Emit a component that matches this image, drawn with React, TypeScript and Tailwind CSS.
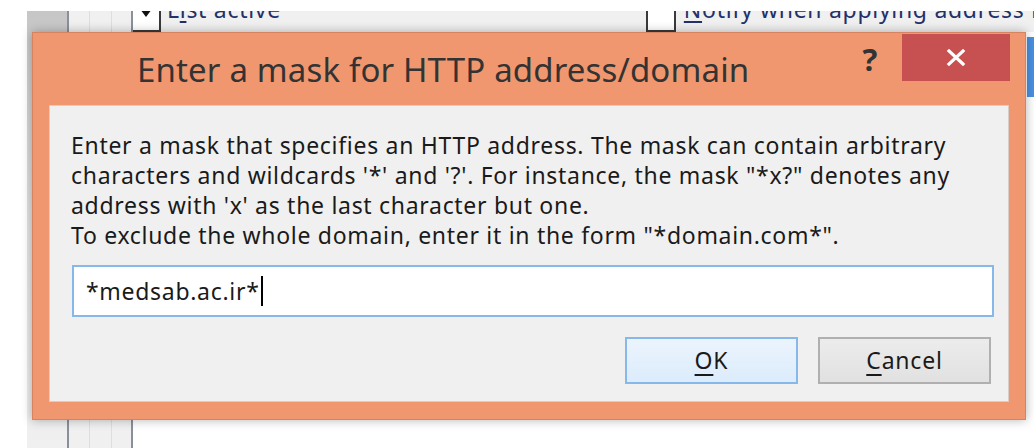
const font = "font-['Noto_Sans','Open_Sans',sans-serif]";

function CloseGlyph() {
  return (
    <svg width="20" height="17" viewBox="0 0 20 17" aria-hidden>
      <path d="M3 2 L17 15 M17 2 L3 15" stroke="#ffffff" strokeWidth="3.2" strokeLinecap="square" />
    </svg>
  );
}

function Check({ checked }: { checked?: boolean }) {
  return (
    <div className="mt-[-9px] flex h-[30px] w-[30px] shrink-0 items-start justify-center border-2 border-[#3a3a3a] bg-white">
      {checked && (
        <svg width="14" height="10" viewBox="0 0 14 10" className="mt-[4px]" aria-hidden>
          <path d="M1 1 L13 1 L7 9 Z" fill="#111" />
        </svg>
      )}
    </div>
  );
}

function DialogButton({ mnemonic, rest, primary }: { mnemonic: string; rest: string; primary?: boolean }) {
  return (
    <button
      className={
        "flex h-[47px] w-[173px] items-center justify-center border-2 text-[23px] leading-none tracking-[0.8px] text-[#1a1a1a] " +
        (primary
          ? "border-[#86b9ea] bg-gradient-to-b from-[#ebf4fc] to-[#dcecfc]"
          : "border-[#b0b0b0] bg-gradient-to-b from-[#ececec] to-[#e1e1e1]")
      }
    >
      <span>
        <u className="underline-offset-[5px]">{mnemonic}</u>
        {rest}
      </span>
    </button>
  );
}

export default function App() {
  return (
    <div className={`relative h-[448px] w-[1034px] overflow-hidden bg-white ${font}`}>
      {/* window behind the dialog */}
      <div className="flex h-full pt-[11px]">
        <div className="w-[27px] shrink-0" />
        <div className="w-[40px] shrink-0 bg-gradient-to-b from-[#c6c6c6] via-[#e4e4e4] to-[#f0f0f0]" />
        <div className="w-[2px] shrink-0 bg-[#8a9099]" />
        <div className="flex w-[62px] shrink-0 bg-[#f0f0f0]">
          <div className="ml-[20px] w-px bg-[#dedede]" />
          <div className="ml-[21px] w-px bg-[#dedede]" />
        </div>
        <div className="w-[2px] shrink-0 bg-[#8a9099]" />
        <div className="flex min-w-0 flex-1 flex-col overflow-hidden">
          <div className="flex h-[21px] items-start overflow-hidden bg-[#f0f0f0]">
            <div className="ml-[-2px] shrink-0">
              <Check checked />
            </div>
            <span className="ml-[6px] mt-[-17px] shrink-0 whitespace-nowrap text-[23px] leading-[30px] tracking-[0.7px] text-[#23306a]">
              L<u className="underline-offset-[3px]">i</u>st active
            </span>
            <div className="ml-[365px] shrink-0">
              <Check />
            </div>
            <span className="ml-[8px] mt-[-17px] shrink-0 whitespace-nowrap text-[23px] leading-[30px] tracking-[0.7px] text-[#23306a]">
              <u className="underline-offset-[3px]">N</u>otify when applying address rules
            </span>
          </div>
          <div className="mt-[5px] flex justify-end">
            <div className="h-[60px] w-[7px] bg-[#4a90e2]" />
          </div>
        </div>
      </div>

      {/* mask dialog */}
      <div className="absolute left-[32px] top-[32px] flex h-[388px] w-[994px] flex-col border border-[#d8835f] bg-[#f0976f] shadow-[0_0_10px_rgba(0,0,0,0.3)]">
        <div className="flex h-[72px] items-start">
          <div className="flex-1 whitespace-nowrap pl-[104px] pt-[17px] text-[33px] leading-[40px] tracking-[0.15px] text-[#333333]">
            Enter a mask for HTTP address/domain
          </div>
          <div className="mr-[12px] w-[40px] pt-[6px] text-center text-[31px] font-bold leading-[40px] text-[#333333]">?</div>
          <div className="mr-[15px] mt-[1px] flex h-[47px] w-[108px] items-center justify-center bg-[#c75050]">
            <CloseGlyph />
          </div>
        </div>

        <div className="mx-[16px] flex h-[297px] flex-col border border-[#d9cdc8] bg-[#f0f0f0]">
          <p className="whitespace-nowrap pl-[21px] pt-[24px] text-[23px] leading-[30px] tracking-[0.7px] text-[#1a1a1a]">
            Enter a mask that specifies an HTTP address. The mask can contain arbitrary
            <br />
            characters and wildcards '*' and '?'. For instance, the mask "*x?" denotes any
            <br />
            address with 'x' as the last character but one.
            <br />
            To exclude the whole domain, enter it in the form "*domain.com*".
          </p>

          <div className="ml-[22px] mr-[14px] mt-[15px] flex h-[52px] items-center border-2 border-[#86b9ea] bg-white pl-[12px] text-[23px] tracking-[0.7px] text-[#1a1a1a]">
            <span>*medsab.ac.ir*</span>
            <span className="ml-[1px] h-[30px] w-[2px] bg-black" />
          </div>

          <div className="mr-[17px] mt-[20px] flex justify-end gap-[20px]">
            <DialogButton mnemonic="O" rest="K" primary />
            <DialogButton mnemonic="C" rest="ancel" />
          </div>
        </div>
      </div>
    </div>
  );
}
